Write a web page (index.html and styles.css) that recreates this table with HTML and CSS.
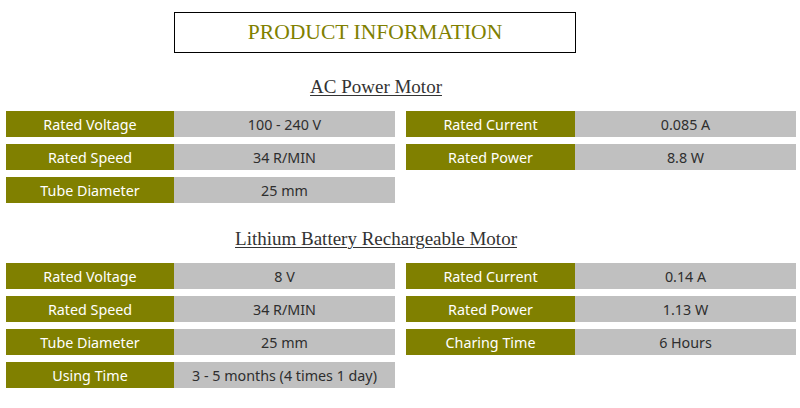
FILE: index.html
```html
<!DOCTYPE html>
<html lang="en">
<head>
<meta charset="utf-8">
<title>Product Information</title>
<link rel="stylesheet" href="styles.css">
</head>
<body>
<div class="page">
  <div class="head-wrap">
    <h1 class="banner">PRODUCT INFORMATION</h1>
  </div>

  <h2 class="section-title"><span>AC Power Motor</span></h2>
  <div class="spec-grid">
    <div class="spec"><div class="label">Rated Voltage</div><div class="value">100 - 240 V</div></div>
    <div class="spec"><div class="label">Rated Current</div><div class="value">0.085 A</div></div>
    <div class="spec"><div class="label">Rated Speed</div><div class="value">34 R/MIN</div></div>
    <div class="spec"><div class="label">Rated Power</div><div class="value">8.8 W</div></div>
    <div class="spec"><div class="label">Tube Diameter</div><div class="value">25 mm</div></div>
  </div>

  <h2 class="section-title second"><span>Lithium Battery Rechargeable Motor</span></h2>
  <div class="spec-grid">
    <div class="spec"><div class="label">Rated Voltage</div><div class="value">8 V</div></div>
    <div class="spec"><div class="label">Rated Current</div><div class="value">0.14 A</div></div>
    <div class="spec"><div class="label">Rated Speed</div><div class="value">34 R/MIN</div></div>
    <div class="spec"><div class="label">Rated Power</div><div class="value">1.13 W</div></div>
    <div class="spec"><div class="label">Tube Diameter</div><div class="value">25 mm</div></div>
    <div class="spec"><div class="label">Charing Time</div><div class="value">6 Hours</div></div>
    <div class="spec"><div class="label">Using Time</div><div class="value">3 - 5 months (4 times 1 day)</div></div>
  </div>
</div>
</body>
</html>
```

FILE: styles.css
```css
html, body {
  margin: 0;
  padding: 0;
  background: #ffffff;
}

.page {
  width: 800px;
  padding-top: 12px;
  box-sizing: border-box;
}

.head-wrap {
  width: 750px;
  display: flex;
  justify-content: center;
}

.banner {
  margin: 0;
  width: 400px;
  height: 39px;
  border: 1px solid #000000;
  font-family: "Liberation Serif", "Times New Roman", serif;
  font-weight: normal;
  font-size: 21.6px;
  line-height: 39px;
  color: #808000;
  text-align: center;
}

.section-title {
  width: 752px;
  margin: 24px 0 14px 0;
  font-family: "Liberation Serif", "Times New Roman", serif;
  font-weight: normal;
  font-size: 19px;
  line-height: 20px;
  color: #333333;
  text-align: center;
}

.section-title span {
  text-decoration: underline;
  text-decoration-thickness: 1px;
  text-underline-offset: 2px;
}

.section-title.second {
  margin-top: 26px;
}

.spec-grid {
  margin-left: 6px;
  display: grid;
  grid-template-columns: 389px 390px;
  grid-auto-rows: 26px;
  column-gap: 11px;
  row-gap: 7px;
}

.spec {
  display: flex;
  font-family: "Noto Sans", "Open Sans", sans-serif;
  font-size: 14.3px;
  line-height: 24px;
}

.label {
  width: 168px;
  flex: none;
  padding-top: 2px;
  background: #808000;
  color: #ffffff;
  text-align: center;
}

.spec-grid .spec:nth-child(2n) .label {
  width: 169px;
}

.value {
  flex: 1;
  padding-top: 2px;
  background: #c0c0c0;
  color: #2e2e2e;
  text-align: center;
}
```
